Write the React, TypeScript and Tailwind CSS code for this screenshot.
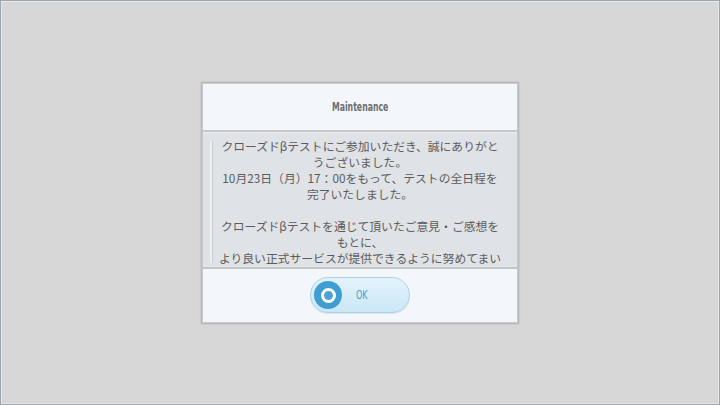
import React from "react";

export default function App() {
  const jp = { fontFamily: '"Noto Sans CJK JP", "Noto Sans", sans-serif' };
  const lines = [
    "クローズドβテストにご参加いただき、誠にありがと",
    "うございました。",
    "10月23日（月）17：00をもって、テストの全日程を",
    "完了いたしました。",
    "\u00a0",
    "クローズドβテストを通じて頂いたご意見・ご感想を",
    "もとに、",
    "より良い正式サービスが提供できるように努めてまい",
    "ります。",
  ];
  return (
    <div className="w-[720px] h-[405px] bg-[#d7d7d7] border border-[#9ea6ae] overflow-hidden">
      <div className="w-full h-full border border-[#e6e6e6] flex items-center justify-center">
        <div className="w-[318px] h-[242px] border border-[#b9b9b9] bg-[#c9c9c9] p-px flex flex-col shadow-[0_0_2px_rgba(0,0,0,0.15)]">
          <div className="h-[48px] bg-[#f3f6fb] flex items-center justify-center border-b-2 border-[#c4c6c9]">
            <span
              className="text-[12px] text-[#6e6e6e] font-bold inline-block scale-x-[0.72] mt-[1px]"
              style={{ fontFamily: '"DejaVu Sans Condensed", "DejaVu Sans", sans-serif' }}
            >
              Maintenance
            </span>
          </div>
          <div className="h-[135px] bg-[#dfe2e6] border-t border-[#eef0f2] flex overflow-hidden">
            <div className="w-[10px] flex justify-end pt-[8px] pb-[4px]">
              <div className="w-[3px] h-full bg-[#eceef0] border-r border-[#c9ccd0]" />
            </div>
            <div className="flex-1 flex justify-center">
              <div
                className="pt-[5px] text-[11.8px] leading-[16px] text-[#5c5c5c] text-center whitespace-nowrap"
                style={jp}
              >
                {lines.map((l, i) => (
                  <p key={i}>{l}</p>
                ))}
              </div>
            </div>
            <div className="w-[10px]" />
          </div>
          <div className="flex-1 bg-[#f3f6fb] border-t-2 border-[#c4c6c9] flex items-center justify-center">
            <div className="w-[100px] h-[36px] rounded-full border border-[#a8d2ea] bg-gradient-to-b from-[#e3f3fc] to-[#cbe7f6] flex items-center pl-[3px] shadow-[0_1px_1px_rgba(0,0,0,0.08)]">
              <div className="w-[28px] h-[28px] rounded-full bg-[#3f9dd2] flex items-center justify-center">
                <div className="w-[15px] h-[15px] rounded-full border-[3px] border-white bg-[#4aa3d6]" />
              </div>
              <span
                className="ml-[12px] text-[12px] text-[#4a9ccc] inline-block scale-x-[0.75]"
                style={{ fontFamily: '"DejaVu Sans Condensed", "DejaVu Sans", sans-serif' }}
              >
                OK
              </span>
            </div>
          </div>
        </div>
      </div>
    </div>
  );
}
